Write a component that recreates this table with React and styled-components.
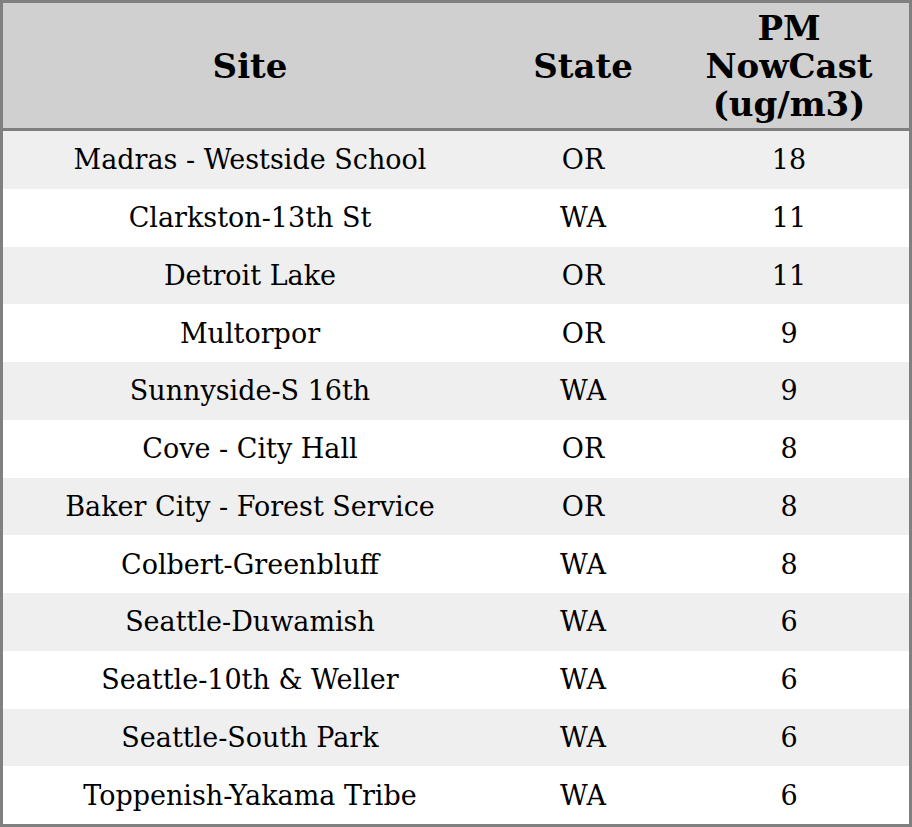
import React from 'react';
import styled, { createGlobalStyle } from 'styled-components';

const rows = [
  ['Madras - Westside School', 'OR', 18],
  ['Clarkston-13th St', 'WA', 11],
  ['Detroit Lake', 'OR', 11],
  ['Multorpor', 'OR', 9],
  ['Sunnyside-S 16th', 'WA', 9],
  ['Cove - City Hall', 'OR', 8],
  ['Baker City - Forest Service', 'OR', 8],
  ['Colbert-Greenbluff', 'WA', 8],
  ['Seattle-Duwamish', 'WA', 6],
  ['Seattle-10th & Weller', 'WA', 6],
  ['Seattle-South Park', 'WA', 6],
  ['Toppenish-Yakama Tribe', 'WA', 6],
];

const GlobalStyle = createGlobalStyle`
  html, body {
    margin: 0;
    padding: 0;
    background: #fff;
  }
  body {
    font-family: "DejaVu Serif", "Liberation Serif", serif;
  }
`;

const Table = styled.div`
  width: 912px;
  height: 827px;
  box-sizing: border-box;
  border: 3px solid #808080;
  display: grid;
  grid-template-rows: 128px 1fr;
`;

const Header = styled.div`
  display: grid;
  grid-template-columns: 494px 172px 1fr;
  background: #d0d0d0;
  border-bottom: 3px solid #808080;
`;

const HeadCell = styled.div`
  display: flex;
  align-items: center;
  justify-content: center;
  text-align: center;
  font-weight: bold;
  font-size: 34px;
  line-height: 38px;
  color: #000;
`;

const Body = styled.div`
  display: grid;
  grid-template-rows: repeat(12, 1fr);
`;

const Row = styled.div`
  display: grid;
  grid-template-columns: 494px 172px 1fr;
  background: ${p => (p.$shaded ? '#efefef' : '#fff')};
`;

const Cell = styled.div`
  display: flex;
  align-items: center;
  justify-content: center;
  font-size: 27px;
  color: #000;
  white-space: nowrap;
`;

export default function App() {
  return (
    <>
      <GlobalStyle />
      <Table>
        <Header>
          <HeadCell>Site</HeadCell>
          <HeadCell>State</HeadCell>
          <HeadCell>PM<br />NowCast<br />(ug/m3)</HeadCell>
        </Header>
        <Body>
          {rows.map(([site, state, pm], i) => (
            <Row key={site} $shaded={i % 2 === 0}>
              <Cell>{site}</Cell>
              <Cell>{state}</Cell>
              <Cell>{pm}</Cell>
            </Row>
          ))}
        </Body>
      </Table>
    </>
  );
}
